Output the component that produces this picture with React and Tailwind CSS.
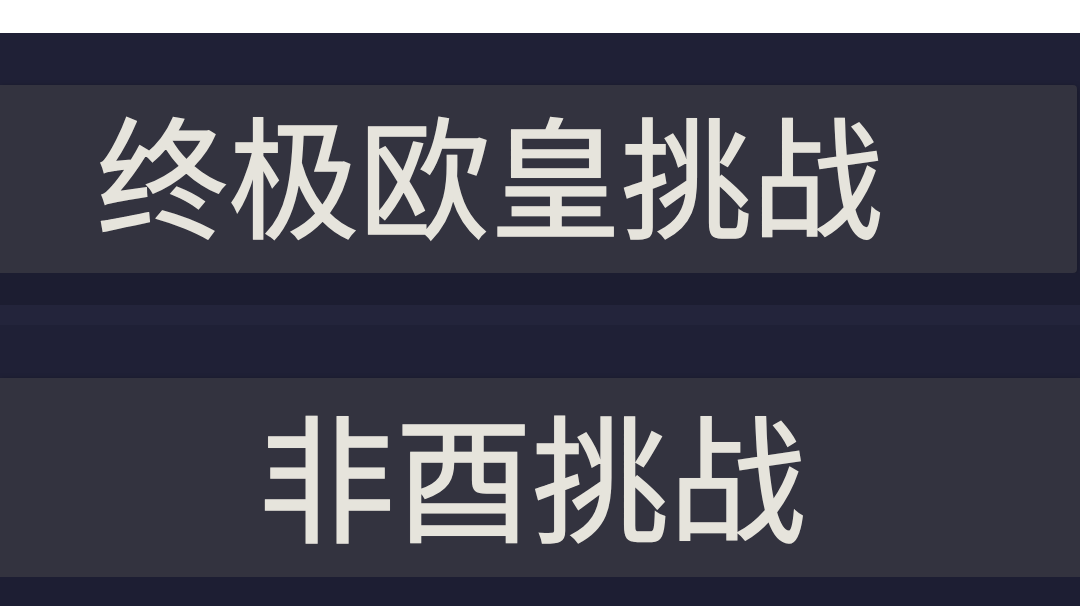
export default function App() {
  const font = { fontFamily: '"Noto Sans CJK SC", "Noto Sans", sans-serif' };
  return (
    <div className="w-[1080px] h-[606px] overflow-hidden flex flex-col bg-white" style={font}>
      <div className="h-[33px] bg-white shrink-0" />
      <div className="flex-1 flex flex-col bg-[#1f2036]">
        <div className="h-[52px] shrink-0" />
        <div className="h-[188px] shrink-0 w-[1077px] rounded-r-[4px] bg-[#33333f] shadow-[0_2px_6px_rgba(0,0,0,0.35)] flex items-center pl-[97px]">
          <span className="text-[131px] leading-none font-normal text-[#e6e4dc] [-webkit-text-stroke:1.5px_#e6e4dc] [text-shadow:0_0_1px_#e6e4dc] whitespace-nowrap -translate-y-[8px]">终极欧皇挑战</span>
        </div>
        <div className="h-[32px] shrink-0 bg-[#1c1d31]" />
        <div className="h-[20px] shrink-0 bg-[#23243b]" />
        <div className="h-[53px] shrink-0" />
        <div className="h-[199px] shrink-0 w-[1080px] bg-[#33333f] shadow-[0_2px_6px_rgba(0,0,0,0.35)] flex items-center pl-[258px]">
          <span className="text-[137px] leading-none font-normal text-[#e6e4dc] [-webkit-text-stroke:1.5px_#e6e4dc] [text-shadow:0_0_1px_#e6e4dc] whitespace-nowrap -translate-y-[5px]">非酉挑战</span>
        </div>
        <div className="flex-1 bg-[#1d1e33]" />
      </div>
    </div>
  );
}
